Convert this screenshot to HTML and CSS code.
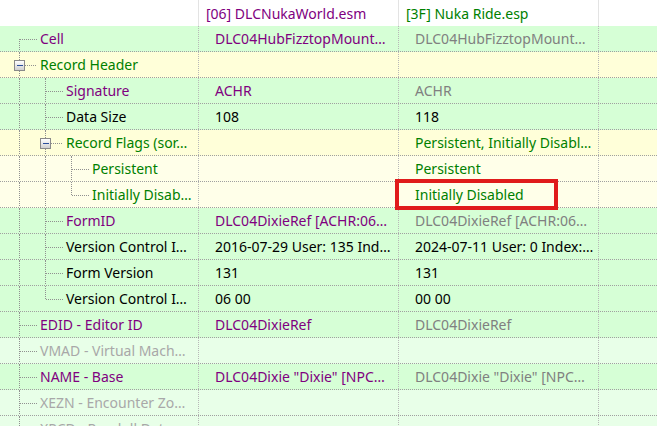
FILE: index.html
```html
<!DOCTYPE html>
<html lang="en">
<head>
    <meta charset="UTF-8">
    <title>Record compare</title>
    <link rel="stylesheet" href="styles.css">
</head>
<body>
    <div class="tree">
        <div class="hdr">
            <div class="c c1"></div>
            <div class="c c2 purple">[06] DLCNukaWorld.esm</div>
            <div class="c c3 green">[3F] Nuka Ride.esp</div>
            <div class="c c4"></div>
        </div>

        <div class="row g">
            <div class="c c1"><span class="gd first"></span><span class="lbl purple">Cell</span></div>
            <div class="c c2 purple">DLC04HubFizztopMount…</div>
            <div class="c c3 gray">DLC04HubFizztopMount…</div>
            <div class="c c4"></div>
        </div>
        <div class="row y">
            <div class="c c1"><span class="gd box pass"></span><span class="lbl green">Record Header</span></div>
            <div class="c c2"></div>
            <div class="c c3"></div>
            <div class="c c4"></div>
        </div>
        <div class="row g">
            <div class="c c1"><span class="gd pass"></span><span class="gd mid"></span><span class="lbl purple">Signature</span></div>
            <div class="c c2 purple">ACHR</div>
            <div class="c c3 gray">ACHR</div>
            <div class="c c4"></div>
        </div>
        <div class="row g">
            <div class="c c1"><span class="gd pass"></span><span class="gd mid"></span><span class="lbl">Data Size</span></div>
            <div class="c c2">108</div>
            <div class="c c3">118</div>
            <div class="c c4"></div>
        </div>
        <div class="row y">
            <div class="c c1"><span class="gd pass"></span><span class="gd box pass"></span><span class="lbl green">Record Flags (sor…</span></div>
            <div class="c c2"></div>
            <div class="c c3 green">Persistent, Initially Disabl…</div>
            <div class="c c4"></div>
        </div>
        <div class="row yl">
            <div class="c c1"><span class="gd pass"></span><span class="gd pass"></span><span class="gd mid"></span><span class="lbl green">Persistent</span></div>
            <div class="c c2"></div>
            <div class="c c3 green">Persistent</div>
            <div class="c c4"></div>
        </div>
        <div class="row yl">
            <div class="c c1"><span class="gd pass"></span><span class="gd pass"></span><span class="gd last"></span><span class="lbl green">Initially Disab…</span></div>
            <div class="c c2"></div>
            <div class="c c3 green">Initially Disabled<span class="mark"></span></div>
            <div class="c c4"></div>
        </div>
        <div class="row g">
            <div class="c c1"><span class="gd pass"></span><span class="gd mid"></span><span class="lbl purple">FormID</span></div>
            <div class="c c2 purple">DLC04DixieRef [ACHR:06…</div>
            <div class="c c3 gray">DLC04DixieRef [ACHR:06…</div>
            <div class="c c4"></div>
        </div>
        <div class="row g">
            <div class="c c1"><span class="gd pass"></span><span class="gd mid"></span><span class="lbl">Version Control I…</span></div>
            <div class="c c2">2016-07-29 User: 135 Ind…</div>
            <div class="c c3">2024-07-11 User: 0 Index:…</div>
            <div class="c c4"></div>
        </div>
        <div class="row g">
            <div class="c c1"><span class="gd pass"></span><span class="gd mid"></span><span class="lbl">Form Version</span></div>
            <div class="c c2">131</div>
            <div class="c c3">131</div>
            <div class="c c4"></div>
        </div>
        <div class="row g">
            <div class="c c1"><span class="gd pass"></span><span class="gd last"></span><span class="lbl">Version Control I…</span></div>
            <div class="c c2">06 00</div>
            <div class="c c3">00 00</div>
            <div class="c c4"></div>
        </div>
        <div class="row g">
            <div class="c c1"><span class="gd mid"></span><span class="lbl purple">EDID - Editor ID</span></div>
            <div class="c c2 purple">DLC04DixieRef</div>
            <div class="c c3 gray">DLC04DixieRef</div>
            <div class="c c4"></div>
        </div>
        <div class="row gl">
            <div class="c c1"><span class="gd mid"></span><span class="lbl faint">VMAD - Virtual Mach…</span></div>
            <div class="c c2"></div>
            <div class="c c3"></div>
            <div class="c c4"></div>
        </div>
        <div class="row g">
            <div class="c c1"><span class="gd mid"></span><span class="lbl purple">NAME - Base</span></div>
            <div class="c c2 purple">DLC04Dixie "Dixie" [NPC…</div>
            <div class="c c3 gray">DLC04Dixie "Dixie" [NPC…</div>
            <div class="c c4"></div>
        </div>
        <div class="row gl">
            <div class="c c1"><span class="gd mid"></span><span class="lbl faint">XEZN - Encounter Zo…</span></div>
            <div class="c c2"></div>
            <div class="c c3"></div>
            <div class="c c4"></div>
        </div>
        <div class="row gl">
            <div class="c c1"><span class="gd mid"></span><span class="lbl faint">XPCD - Ragdoll Dat…</span></div>
            <div class="c c2"></div>
            <div class="c c3"></div>
            <div class="c c4"></div>
        </div>
    </div>
</body>
</html>
```

FILE: styles.css
```css
body {
    margin: 0;
    background-color: #fff;
    font-family: "Noto Sans", "Open Sans", sans-serif;
    font-size: 14px;
    color: #000;
    overflow: hidden;
}
.tree {
    width: 657px;
}
.hdr, .row {
    display: flex;
    height: 26px;
    box-sizing: border-box;
}
.row {
    border-bottom: 1px dotted #a0a0a0;
}
.c {
    flex: none;
    box-sizing: border-box;
    height: 100%;
    display: flex;
    align-items: center;
    white-space: nowrap;
    overflow: hidden;
}
.c1 { width: 199px; padding-left: 6px; }
.c2 { width: 200px; padding-left: 16px; }
.c3 { width: 200px; padding-left: 16px; overflow: visible; position: relative; }
.c4 { flex: 1; }
.row .c1, .row .c2, .row .c3 {
    border-right: 1px dotted #b8b8b8;
}
.hdr .c {
    padding-left: 7px;
}
.hdr .c1, .hdr .c2, .hdr .c3 {
    border-right: 1px solid #e3e3e3;
}

.g { background-color: #d6ffd6; }
.gl { background-color: #e8ffe8; }
.y { background-color: #ffffd9; }
.yl { background-color: #ffffe9; }

.purple { color: #800080; }
.green { color: #008000; }
.gray { color: #808080; }
.faint { color: #a8a8a8; }

.lbl {
    padding-left: 8px;
}

/* tree guides */
.gd {
    flex: none;
    position: relative;
    width: 26px;
    height: 26px;
}
.gd::before, .gd::after {
    content: "";
    position: absolute;
}
.gd.pass::before, .gd.mid::before {
    left: 13px;
    top: 0;
    height: 26px;
    border-left: 1px dotted #909090;
}
.gd.last::before {
    left: 13px;
    top: 0;
    height: 13px;
    border-left: 1px dotted #909090;
}
.gd.first::before {
    left: 13px;
    top: 13px;
    height: 13px;
    border-left: 1px dotted #909090;
}
.gd.mid::after, .gd.last::after, .gd.first::after {
    left: 14px;
    top: 13px;
    width: 17px;
    border-top: 1px dotted #909090;
}

/* expander box with minus sign */
.gd.box::after {
    left: 8px;
    top: 8px;
    width: 9px;
    height: 9px;
    border: 1px solid #8a8a8a;
    background:
        linear-gradient(#2b4f9c, #2b4f9c) 2px 4px / 6px 1px no-repeat,
        linear-gradient(#ffffff, #d0d0d0);
}
.gd.box + .lbl {
    position: relative;
}
.gd.box + .lbl::before {
    content: "";
    position: absolute;
    left: -7px;
    top: 50%;
    width: 11px;
    border-top: 1px dotted #909090;
}

.mark {
    position: absolute;
    left: -4px;
    top: -3px;
    width: 163px;
    height: 31px;
    box-sizing: border-box;
    border: 4px solid #e01b1b;
}
```
